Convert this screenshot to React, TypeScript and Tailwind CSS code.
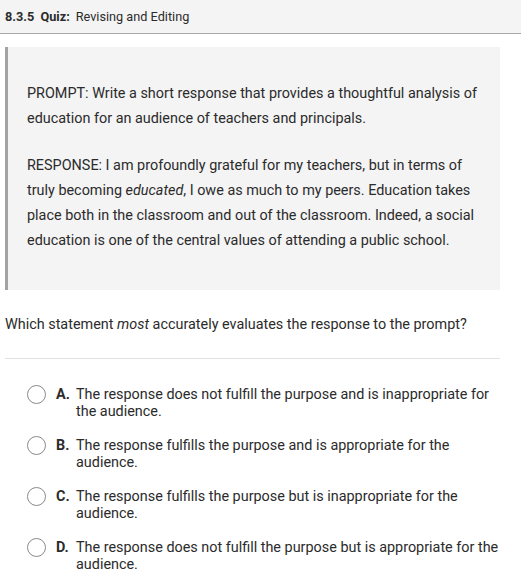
import React from "react";

const options = [
  { letter: "A.", text: "The response does not fulfill the purpose and is inappropriate for the audience." },
  { letter: "B.", text: "The response fulfills the purpose and is appropriate for the audience." },
  { letter: "C.", text: "The response fulfills the purpose but is inappropriate for the audience." },
  { letter: "D.", text: "The response does not fulfill the purpose but is appropriate for the audience." },
];

export default function App() {
  return (
    <div className="w-[521px] min-h-[575px] bg-white text-[#2b2b2b] font-['Roboto',sans-serif]">
      {/* Header */}
      <div className="h-[34px] bg-[#f4f4f4] border-b border-[#a9a9a9] flex items-center px-[5px] text-[12.7px]">
        <span className="font-bold">8.3.5&nbsp; Quiz:</span>
        <span className="ml-[6px]">Revising and Editing</span>
      </div>

      {/* Passage */}
      <div className="mt-[13px] ml-[5px] w-[495px] bg-[#f4f4f4] border-l-[3px] border-[#a3a3a3] pl-[19px] pr-[18px] pt-[34px] pb-[37px] text-[14.4px] leading-[25px]">
        <p>
          PROMPT: Write a short response that provides a thoughtful analysis of education for an audience of teachers and principals.
        </p>
        <p className="mt-[22px]">
          RESPONSE: I am profoundly grateful for my teachers, but in terms of truly becoming <em>educated</em>, I owe as much to my peers. Education takes place both in the classroom and out of the classroom. Indeed, a social education is one of the central values of attending a public school.
        </p>
      </div>

      {/* Question */}
      <p className="mt-[22px] px-[5px] text-[14.4px] leading-[25px]">
        Which statement <em>most</em> accurately evaluates the response to the prompt?
      </p>
      <div className="mt-[21px] ml-[5px] w-[495px] border-t border-[#e2e2e2]" />

      {/* Options */}
      <div className="mt-[27px] flex flex-col gap-[17px] pl-[27px] pr-[21px]">
        {options.map((o) => (
          <label key={o.letter} className="flex items-start text-[14.4px] leading-[17px] cursor-pointer">
            <span className="mt-[-1px] w-[19px] h-[19px] shrink-0 rounded-full border-[1.5px] border-[#8a8a8a] bg-white" />
            <span className="ml-[10px] w-[20px] shrink-0 font-bold">{o.letter}</span>
            <span>{o.text}</span>
          </label>
        ))}
      </div>
    </div>
  );
}
